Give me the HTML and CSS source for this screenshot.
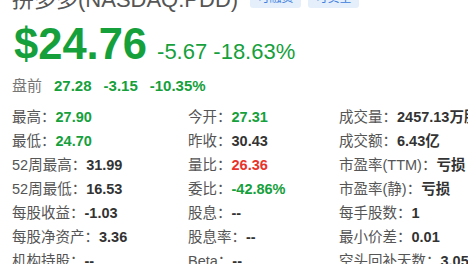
FILE: index.html
```html
<!DOCTYPE html>
<html lang="zh-CN">
<head>
    <meta charset="UTF-8">
    <title>拼多多 PDD</title>
    <link rel="stylesheet" href="styles.css">
</head>
<body>
    <div class="quote">
        <div class="title">
            <span class="name">拼多多(NASDAQ:PDD)</span>
            <span class="tag">可融资</span>
            <span class="tag">可卖空</span>
        </div>

        <div class="price-row">
            <span class="price">$24.76</span>
            <span class="change">-5.67 -18.63%</span>
        </div>

        <div class="pre-row">
            <span class="pre-label">盘前</span>
            <span class="pre-value">27.28</span>
            <span class="pre-value">-3.15</span>
            <span class="pre-value">-10.35%</span>
        </div>

        <div class="stats">
            <div class="stat">最高：<b class="down">27.90</b></div>
            <div class="stat">今开：<b class="down">27.31</b></div>
            <div class="stat">成交量：<b>2457.13万股</b></div>

            <div class="stat">最低：<b class="down">24.70</b></div>
            <div class="stat">昨收：<b>30.43</b></div>
            <div class="stat">成交额：<b>6.43亿</b></div>

            <div class="stat">52周最高：<b>31.99</b></div>
            <div class="stat">量比：<b class="up">26.36</b></div>
            <div class="stat">市盈率(TTM)：<b>亏损</b></div>

            <div class="stat">52周最低：<b>16.53</b></div>
            <div class="stat">委比：<b class="down">-42.86%</b></div>
            <div class="stat">市盈率(静)：<b>亏损</b></div>

            <div class="stat">每股收益：<b>-1.03</b></div>
            <div class="stat">股息：<b>--</b></div>
            <div class="stat">每手股数：<b>1</b></div>

            <div class="stat">每股净资产：<b>3.36</b></div>
            <div class="stat">股息率：<b>--</b></div>
            <div class="stat">最小价差：<b>0.01</b></div>

            <div class="stat">机构持股：<b>--</b></div>
            <div class="stat">Beta：<b>--</b></div>
            <div class="stat">空头回补天数：<b>3.05</b></div>
        </div>
    </div>
</body>
</html>
```

FILE: styles.css
```css
* {
    box-sizing: border-box;
    margin: 0;
    padding: 0;
    font-family: "Liberation Sans", "Noto Sans CJK SC", sans-serif;
}

body {
    background-color: white;
    overflow: hidden;
}

.quote {
    padding: 0 0 0 12px;
    white-space: nowrap;
}

.title {
    display: flex;
    align-items: flex-end;
    margin-top: -13px;
    height: 26px;
}

.name {
    font-size: 22px;
    line-height: 26px;
    color: #555;
}

.tag {
    display: inline-block;
    height: 20px;
    width: 51px;
    margin-left: 7px;
    margin-bottom: 5px;
    background-color: #e5effb;
    border-radius: 3px;
    color: #3b7ddd;
    font-size: 12px;
    line-height: 20px;
    text-align: center;
}

.name + .tag {
    margin-left: 12px;
}

.price-row {
    display: flex;
    align-items: baseline;
    gap: 10px;
    margin-top: 7px;
    padding-left: 2px;
    line-height: 48px;
}

.price {
    font-size: 43.5px;
    font-weight: bold;
    color: #15a03c;
}

.change {
    font-size: 22px;
    color: #15a03c;
}

.pre-row {
    display: flex;
    gap: 12px;
    margin-top: 0;
    font-size: 15px;
    line-height: 20px;
}

.pre-label {
    color: #777;
}

.pre-value {
    font-weight: bold;
    color: #15a03c;
}

.stats {
    display: grid;
    grid-template-columns: 176px 151px 1fr;
    margin-top: 9px;
    font-size: 14.5px;
    line-height: 24px;
    color: #555;
}

.stat b {
    color: #333;
}

.stat b.down {
    color: #15a03c;
}

.stat b.up {
    color: #e8332c;
}
```
